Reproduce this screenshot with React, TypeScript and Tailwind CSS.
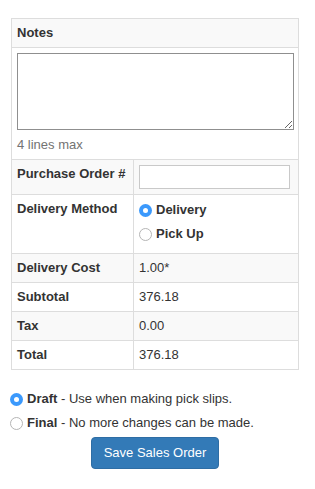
import React from "react";

function Radio({ checked }: { checked: boolean }) {
  return checked ? (
    <span className="inline-flex w-[13px] h-[13px] rounded-full bg-[#3b99fc] items-center justify-center shrink-0">
      <span className="w-[5px] h-[5px] rounded-full bg-white" />
    </span>
  ) : (
    <span className="inline-block w-[13px] h-[13px] rounded-full border border-[#b5b5b5] bg-white shrink-0" />
  );
}

export default function App() {
  const td = "border border-[#dddddd] px-[5px] pt-[5px] pb-[5px] align-top";
  return (
    <div className="bg-white min-h-[489px] text-[13px] leading-[18px] text-[#333333]" style={{ fontFamily: '"Liberation Sans", Arial, sans-serif' }}>
      <div className="pl-[11px] pt-[18px] w-[299px]">
        <table className="w-[288px] border-collapse table-fixed">
          <colgroup>
            <col className="w-[122px]" />
            <col />
          </colgroup>
          <tbody>
            <tr className="bg-[#f9f9f9]">
              <td colSpan={2} className={`${td} font-bold`}>Notes</td>
            </tr>
            <tr>
              <td colSpan={2} className="border border-[#dddddd] px-[5px] pt-[5px] pb-[5px] align-top">
                <textarea className="block w-[277px] h-[77px] border border-[#8f8f8f] bg-white resize-y" />
                <div className="mt-[6px] text-[#737373]">4 lines max</div>
              </td>
            </tr>
            <tr className="bg-[#f9f9f9]">
              <td className={`${td} font-bold`}>Purchase Order #</td>
              <td className={td}>
                <input type="text" className="block w-[151px] h-[24px] border border-[#c9c9c9] bg-white outline-none" />
              </td>
            </tr>
            <tr>
              <td className={`${td} font-bold`}>Delivery Method</td>
              <td className="border border-[#dddddd] px-[5px] pt-[5px] pb-[9px] align-top">
                <div className="flex items-center gap-[4px] h-[20px] font-bold">
                  <Radio checked />
                  <span>Delivery</span>
                </div>
                <div className="flex items-center gap-[4px] h-[20px] mt-[4px] font-bold">
                  <Radio checked={false} />
                  <span>Pick Up</span>
                </div>
              </td>
            </tr>
            <tr className="bg-[#f9f9f9]">
              <td className={`${td} font-bold`}>Delivery Cost</td>
              <td className={td}>1.00*</td>
            </tr>
            <tr>
              <td className={`${td} font-bold`}>Subtotal</td>
              <td className={td}>376.18</td>
            </tr>
            <tr className="bg-[#f9f9f9]">
              <td className={`${td} font-bold`}>Tax</td>
              <td className={td}>0.00</td>
            </tr>
            <tr>
              <td className={`${td} font-bold`}>Total</td>
              <td className={td}>376.18</td>
            </tr>
          </tbody>
        </table>
        <div className="mt-[20px]">
          <div className="flex items-center gap-[4px] h-[18px] -ml-px">
            <Radio checked />
            <span><b>Draft</b> - Use when making pick slips.</span>
          </div>
          <div className="flex items-center gap-[4px] h-[18px] mt-[6px] -ml-px">
            <Radio checked={false} />
            <span><b>Final</b> - No more changes can be made.</span>
          </div>
          <div className="w-[288px] flex justify-center mt-[5px]">
            <button className="h-[32px] px-[12px] rounded-[4px] bg-[#337ab7] border border-[#2e6da4] text-white text-[13px]">
              Save Sales Order
            </button>
          </div>
        </div>
      </div>
    </div>
  );
}
